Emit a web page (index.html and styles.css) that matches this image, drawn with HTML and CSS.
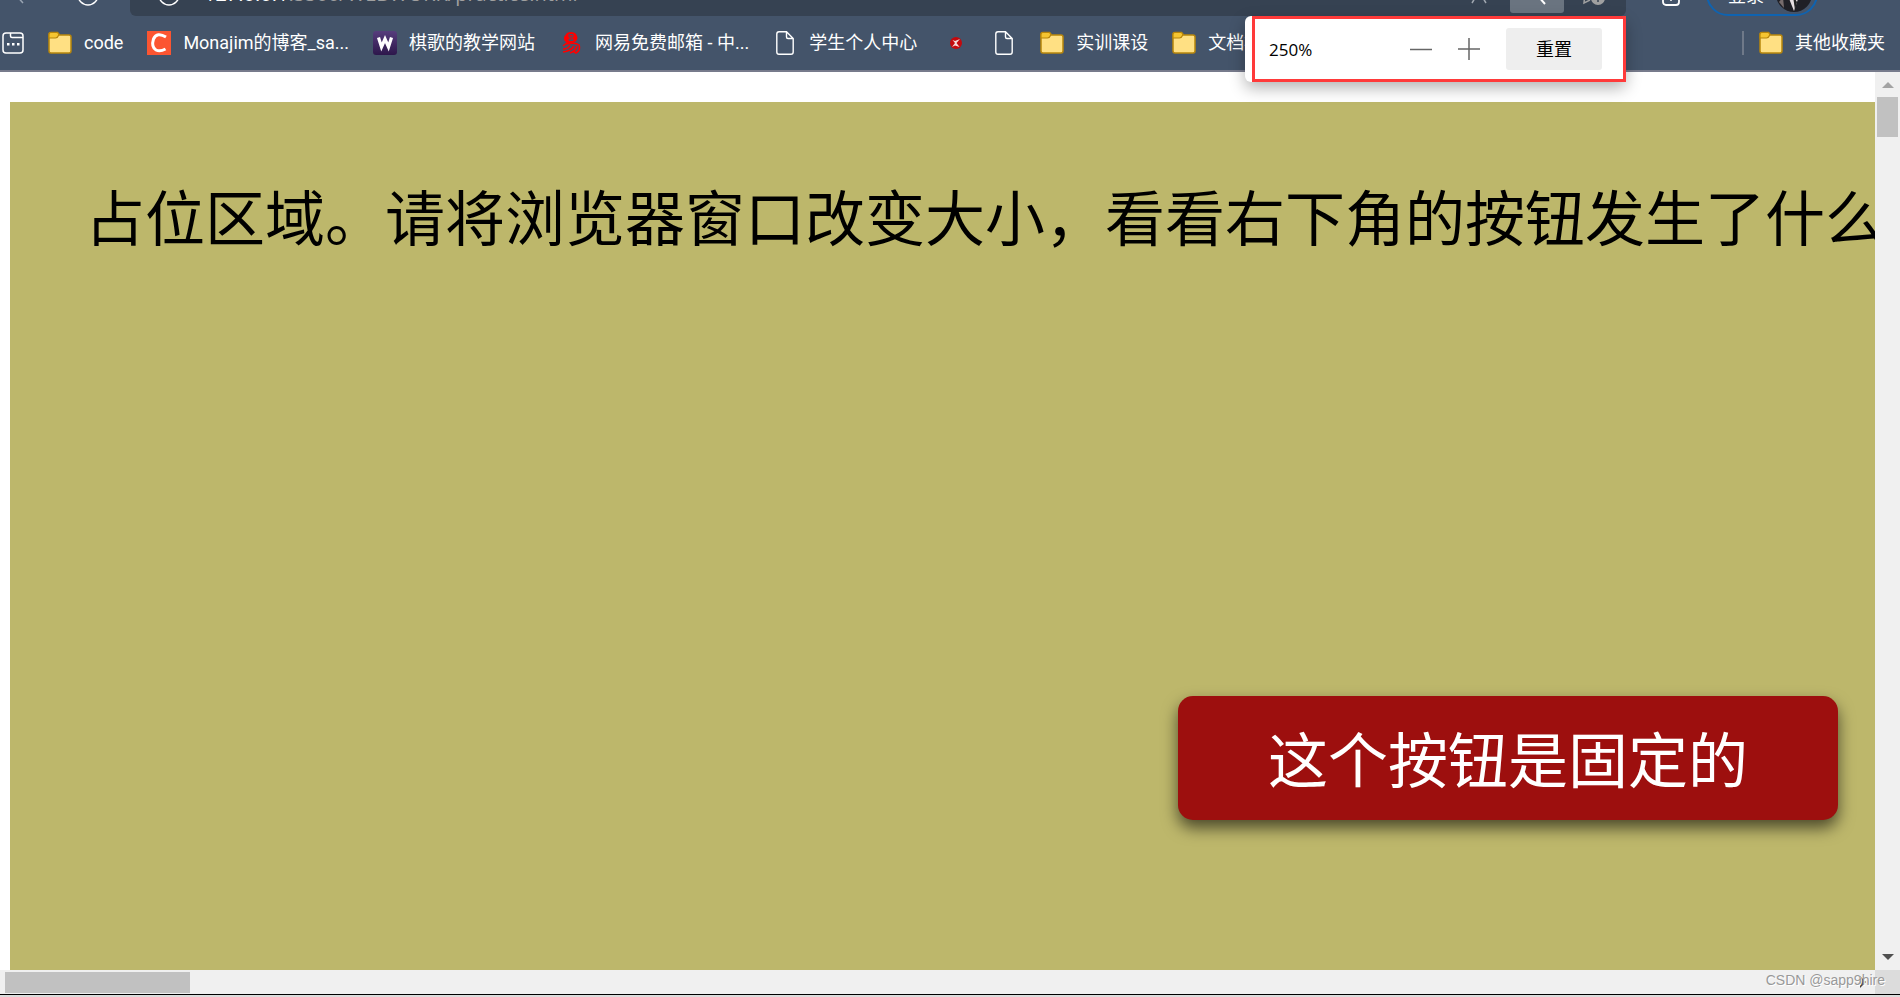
FILE: index.html
```
<!DOCTYPE html>
<html lang="zh-CN">
<head>
    <meta charset="UTF-8">
    <meta name="viewport" content="width=device-width, initial-scale=1.0">
    <title>practice</title>
    <link rel="stylesheet" href="styles.css">
</head>
<body>
    <!-- Shared icons -->
    <svg class="sprite" aria-hidden="true">
        <symbol id="folder" viewBox="0 0 24 24">
            <path d="M1 3.5Q1 1.5 3 1.5H9.5L11.5 4H21Q23 4 23 6V20Q23 22 21 22H3Q1 22 1 20Z" fill="#ffe083" stroke="#b8860b" stroke-width="1.5"/>
            <path d="M1 3.5Q1 1.5 3 1.5H9Q11.5 2.5 10.5 4.5Q9.5 7 7.5 7H1Z" fill="#f5c531" stroke="#b8860b" stroke-width="1.2"/>
        </symbol>
        <symbol id="file" viewBox="0 0 18 24">
            <path d="M3 .8H10.5L17.2 7.5V21Q17.2 23.2 15 23.2H3Q.8 23.2 .8 21V3Q.8 .8 3 .8ZM10.5 .8V6Q10.5 7.5 12 7.5H17.2" fill="none" stroke="#fff" stroke-width="1.4"/>
        </symbol>
    </svg>

    <header class="toolbar">
        <button class="back" aria-label="返回">
            <svg width="14" height="20" viewBox="0 0 14 20"><path d="M11 1L3 10L11 19" fill="none" stroke="#9aa5b3" stroke-width="1.5"/></svg>
        </button>
        <button class="reload" aria-label="刷新">
            <svg width="22" height="22" viewBox="0 0 22 22"><circle cx="11" cy="11" r="10" fill="none" stroke="#fff" stroke-width="1.5"/></svg>
        </button>
        <div class="address">
            <svg width="22" height="22" viewBox="0 0 22 22"><circle cx="11" cy="11" r="10" fill="none" stroke="#fff" stroke-width="1.5"/></svg>
            <span class="url"><b>127.0.0.1</b>:5500/WEBWORK/practice.html</span>
            <svg class="star" width="22" height="22" viewBox="0 0 22 22"><path d="M7 14L4 19M15 14L18 19" fill="none" stroke="#a0a7b0" stroke-width="1.5"/></svg>
            <span class="zoom-tool">
                <svg width="22" height="22" viewBox="0 0 22 22"><circle cx="8" cy="8" r="6" fill="none" stroke="#fff" stroke-width="1.5"/><path d="M12 13L19 21" stroke="#fff" stroke-width="2"/></svg>
            </span>
            <svg class="add-fav" width="24" height="24" viewBox="0 0 24 24"><path d="M3 10L2 21L8 18" fill="none" stroke="#a0a0a0" stroke-width="1.5"/><circle cx="16" cy="16" r="7" fill="#a0a0a0"/><path d="M16 12V20M12 16H20" stroke="#364252" stroke-width="1.5"/></svg>
        </div>
        <svg class="collections" width="18" height="22" viewBox="0 0 18 22"><rect x="1" y="3" width="16" height="18" rx="3" fill="none" stroke="#fff" stroke-width="1.8"/><path d="M9 9V17M5 13H13" stroke="#fff" stroke-width="1.5"/></svg>
        <button class="login">登录
            <svg width="36" height="36" viewBox="0 0 36 36"><circle cx="18" cy="18" r="18" fill="#202026"/><path d="M12 20L18 35L23 20Z" fill="#e8e0e2"/><path d="M17 20L19 34L21 26Z" fill="#222"/><path d="M3 26L8 32L7 21Z" fill="#776c6c"/></svg>
        </button>
    </header>

    <nav class="bookmarks">
        <a class="mark" href="#" aria-label="收藏夹">
            <svg width="22" height="22" viewBox="0 0 22 22"><rect x="1" y="1" width="20" height="20" rx="3" fill="none" stroke="#fff" stroke-width="1.5"/><path d="M8.5 1V4Q8.5 5.5 10 5.5H21" fill="none" stroke="#fff" stroke-width="1.5"/><path d="M5 11H7.5V13.5H5ZM10 11H12.5V13.5H10ZM15 11H17.5V13.5H15Z" fill="#fff"/></svg>
        </a>
        <a class="mark" href="#"><svg width="24" height="24"><use href="#folder"/></svg>code</a>
        <a class="mark" href="#">
            <svg width="24" height="24" viewBox="0 0 24 24"><rect width="24" height="24" fill="#fc5531"/><path d="M19 6Q10 .5 6.5 8Q4 16 9 19Q13 21 18.5 18" fill="none" stroke="#fff" stroke-width="3"/></svg>Monajim的博客_sa...
        </a>
        <a class="mark" href="#">
            <svg width="24" height="24" viewBox="0 0 24 24"><defs><linearGradient id="purple" x2="0" y2="1"><stop stop-color="#563d7c"/><stop offset="1" stop-color="#2d174b"/></linearGradient></defs><rect width="24" height="24" rx="3" fill="url(#purple)"/><path d="M5.5 6.5L8.5 16L12 8L15.5 16L18.5 6.5" fill="none" stroke="#fff" stroke-width="3.2"/></svg>棋歌的教学网站
        </a>
        <a class="mark" href="#">
            <svg width="24" height="24" viewBox="0 0 24 24"><path d="M8 2Q12 0 16 2Q21 7 16 11L13 12H10Q4 11 5 6Z" fill="#f00"/><path d="M10 3.5H14V6H10ZM10 8H14V9.5H10Z" fill="none" stroke="#44546a"/><path d="M9 11L4 15M7 13Q17 11 20 14Q22 19 17 22L14 20M11 14Q9 18 4 18M15 15Q12 20 4 21M18 15Q17 20 11 22" fill="none" stroke="#f00" stroke-width="1.6"/></svg>网易免费邮箱 - 中...
        </a>
        <a class="mark doc" href="#"><svg width="18" height="24"><use href="#file"/></svg>学生个人中心</a>
        <a class="mark" href="#" aria-label="红色书签">
            <svg width="24" height="24" viewBox="0 0 24 24"><circle cx="12" cy="12" r="6" fill="#c4090d"/><path d="M8.5 9L11 10L16 8L12.5 12L15.5 16L11 14.5L8 16L11 12Z" fill="#f4dada"/></svg>
        </a>
        <a class="mark doc" href="#" aria-label="无标题"><svg width="18" height="24"><use href="#file"/></svg></a>
        <a class="mark" href="#"><svg width="24" height="24"><use href="#folder"/></svg>实训课设</a>
        <a class="mark" href="#"><svg width="24" height="24"><use href="#folder"/></svg>文档模</a>
        <a class="mark other" href="#"><svg width="24" height="24"><use href="#folder"/></svg>其他收藏夹</a>
    </nav>

    <!-- Zoom popup -->
    <div class="zoom-popup">
        <div class="zoom-frame">
            <span class="percent">250%</span>
            <button class="step" aria-label="缩小"><svg width="22" height="22" viewBox="0 0 22 22"><path d="M0 11.5H22" stroke="#666" stroke-width="1.5"/></svg></button>
            <button class="step" aria-label="放大"><svg width="22" height="22" viewBox="0 0 22 22"><path d="M0 11H22M11 0V22" stroke="#666" stroke-width="1.5"/></svg></button>
            <button class="reset">重置</button>
        </div>
    </div>

    <div class="window">
        <main class="page">
            <div class="placeholder">占位区域。请将浏览器窗口改变大小，看看右下角的按钮发生了什么</div>
            <button class="fixed-btn">这个按钮是固定的</button>
        </main>
        <div class="scroll-y">
            <svg width="12" height="6" viewBox="0 0 12 6"><path d="M0 6L6 0L12 6Z" fill="#a3a3a3"/></svg>
            <div class="thumb"></div>
            <svg class="down" width="12" height="6" viewBox="0 0 12 6"><path d="M0 0L6 6L12 0Z" fill="#505050"/></svg>
        </div>
        <div class="scroll-x">
            <div class="thumb"></div>
            <svg class="right" width="6" height="12" viewBox="0 0 6 12"><path d="M0 0L6 6L0 12Z" fill="#404040"/></svg>
        </div>
        <div class="corner"></div>
        <span class="watermark">CSDN @sapp9hire</span>
    </div>
    <footer class="edge"></footer>
</body>
</html>
```
FILE: styles.css
```
* {
    margin: 0;
    padding: 0;
    box-sizing: border-box;
}

body {
    height: 100vh;
    display: flex;
    flex-direction: column;
    overflow: hidden;
    position: relative;
    background: #fff;
    color: #000;
    font-family: "Open Sans", "Noto Sans CJK SC", sans-serif;
}

button {
    border: none;
    background: none;
    font: inherit;
    color: inherit;
    cursor: pointer;
}

svg {
    display: block;
    flex-shrink: 0;
}

.sprite {
    position: absolute;
    width: 0;
    height: 0;
}

/* Address row, cut off by the top of the window */
.toolbar {
    height: 16px;
    flex-shrink: 0;
    display: flex;
    align-items: flex-end;
    overflow: hidden;
    background: #44546a;
    color: #fff;
    font-size: 18px;
}

.back {
    margin: 0 0 12px 12px;
}

.reload {
    margin: 0 0 10px 51px;
}

.address {
    height: 44px;
    width: 1496px;
    margin-left: 31px;
    padding: 0 20px 10px 28px;
    display: flex;
    align-items: flex-end;
    background: #364252;
    border-radius: 6px;
}

.url {
    margin-left: 24px;
    font-size: 20px;
    line-height: 24px;
    color: #a0a0a0;
}

.url b {
    font-weight: 400;
    color: #fff;
}

.star {
    margin-left: auto;
}

.zoom-tool {
    width: 54px;
    height: 40px;
    margin: 0 18px -7px 20px;
    padding-bottom: 8px;
    display: flex;
    align-items: flex-end;
    justify-content: center;
    background: #6a7480;
    border-radius: 3px;
}

.collections {
    margin: 0 0 10px 36px;
}

.login {
    height: 44px;
    margin-left: 26px;
    padding: 0 4px 0 20px;
    display: flex;
    align-items: center;
    gap: 12px;
    border: 2px solid #0f63b0;
    border-radius: 22px;
}

/* Bookmarks bar */
.bookmarks {
    height: 56px;
    flex-shrink: 0;
    display: flex;
    align-items: center;
    gap: 24px;
    padding: 0 15px 0 2px;
    background: #44546a;
    border-bottom: 2px solid #777b8c;
    font-family: Roboto, "Noto Sans CJK SC", sans-serif;
    font-size: 18px;
}

.mark {
    display: flex;
    align-items: center;
    gap: 12px;
    color: #fff;
    line-height: 24px;
    text-decoration: none;
    white-space: nowrap;
}

.doc {
    gap: 15px;
    padding: 0 3px;
}

.other {
    margin-left: auto;
    padding-left: 15px;
    border-left: 2px solid #6f7989;
}

/* Zoom popup */
.zoom-popup {
    position: absolute;
    top: 16px;
    right: 274px;
    width: 381px;
    height: 66px;
    padding-left: 7px;
    background: #fff;
    border-radius: 6px;
    box-shadow: 0 6px 16px rgba(0, 0, 0, 0.3);
    z-index: 2;
}

.zoom-frame {
    height: 66px;
    display: flex;
    align-items: center;
    padding: 0 21px 0 14px;
    border: 3px solid #ff3a3a;
}

.percent {
    margin-right: auto;
    font-size: 17px;
}

.step {
    margin-right: 26px;
}

.reset {
    width: 96px;
    height: 42px;
    background: #eee;
    border-radius: 3px;
    font-size: 18px;
    line-height: 24px;
}

/* Page with its scrollbars */
.window {
    flex: 1;
    min-height: 0;
    display: grid;
    grid-template-columns: minmax(0, 1fr) 25px;
    grid-template-rows: minmax(0, 1fr) 24px;
    position: relative;
}

.page {
    display: flex;
    padding: 30px 0 0 10px;
    overflow: hidden;
    position: relative;
}

.placeholder {
    flex: 1;
    padding: 72px 0 0 75px;
    background: #bdb76b;
    font-size: 60px;
    line-height: 88px;
    white-space: nowrap;
}

.fixed-btn {
    position: absolute;
    right: 37px;
    bottom: 150px;
    width: 660px;
    height: 124px;
    padding-top: 4px;
    background: #9d0f0e;
    color: #fff;
    border-radius: 15px;
    box-shadow: 0 8px 16px rgba(0, 0, 0, 0.6);
    font-size: 60px;
    line-height: 88px;
}

.scroll-y {
    display: flex;
    flex-direction: column;
    align-items: center;
    padding: 10px 0;
    background: #f0f0f0;
}

.thumb {
    background: #c1c1c1;
}

.scroll-y .thumb {
    width: 21px;
    height: 40px;
    margin-top: 9px;
}

.down {
    margin-top: auto;
}

.scroll-x {
    display: flex;
    align-items: center;
    padding: 0 9px 0 5px;
    background: #f0f0f0;
}

.scroll-x .thumb {
    width: 185px;
    height: 21px;
}

.right {
    margin-left: auto;
}

.corner {
    background: #dcdcdc;
}

.watermark {
    position: absolute;
    right: 15px;
    bottom: 4px;
    color: #999;
    font-family: "Liberation Sans", sans-serif;
    font-size: 14px;
    line-height: 20px;
    text-shadow: 1px 1px 0 #fff;
}

.edge {
    height: 3px;
    flex-shrink: 0;
    background: #dcdcdc;
    border-top: 1px solid #000;
}
```
